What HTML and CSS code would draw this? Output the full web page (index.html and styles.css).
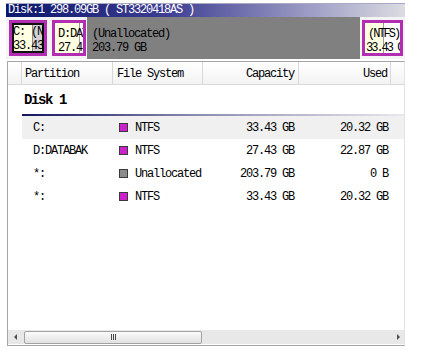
FILE: index.html
```html
<!DOCTYPE html>
<html lang="en">
<head>
    <meta charset="UTF-8">
    <title>Partition Wizard</title>
    <link rel="stylesheet" href="styles.css">
</head>
<body>
    <div class="window">
        <div class="disk-title">Disk:1 298.09GB ( ST3320418AS )</div>

        <div class="disk-map">
            <div class="part part-c selected" style="--used: 62%">
                <div class="label">C: (NTFS)</div>
                <div class="label">33.43 GB</div>
            </div>
            <div class="part part-d" style="--used: 85%">
                <div class="label">D:DATABAK</div>
                <div class="label">27.43 GB</div>
            </div>
            <div class="unallocated">
                <div>(Unallocated)</div>
                <div>203.79 GB</div>
            </div>
            <div class="part part-last" style="--used: 52%">
                <div class="label indent">(NTFS)</div>
                <div class="label">33.43 GB</div>
            </div>
        </div>

        <div class="list">
            <div class="list-head">
                <div class="col"></div>
                <div class="col">Partition</div>
                <div class="col">File System</div>
                <div class="col right">Capacity</div>
                <div class="col right">Used</div>
                <div class="col last"></div>
            </div>

            <div class="list-body">
                <div class="disk-row">Disk 1</div>

                <div class="row selected">
                    <div class="name">C:</div>
                    <div class="fs"><span class="swatch ntfs"></span>NTFS</div>
                    <div class="num cap">33.43 GB</div>
                    <div class="num used">20.32 GB</div>
                </div>
                <div class="row">
                    <div class="name">D:DATABAK</div>
                    <div class="fs"><span class="swatch ntfs"></span>NTFS</div>
                    <div class="num cap">27.43 GB</div>
                    <div class="num used">22.87 GB</div>
                </div>
                <div class="row">
                    <div class="name">*:</div>
                    <div class="fs"><span class="swatch unalloc"></span>Unallocated</div>
                    <div class="num cap">203.79 GB</div>
                    <div class="num used">0 B</div>
                </div>
                <div class="row">
                    <div class="name">*:</div>
                    <div class="fs"><span class="swatch ntfs"></span>NTFS</div>
                    <div class="num cap">33.43 GB</div>
                    <div class="num used">20.32 GB</div>
                </div>
            </div>

            <div class="hscroll">
                <div class="arrow"><span class="tri-left"></span></div>
                <div class="track">
                    <div class="thumb"><span class="grip"></span></div>
                </div>
                <div class="arrow"><span class="tri-right"></span></div>
            </div>
        </div>
    </div>
</body>
</html>
```

FILE: styles.css
```css
body {
    margin: 0;
    background-color: #fff;
    color: #000;
    font-family: "Liberation Mono", "DejaVu Sans Mono", monospace;
    font-size: 12px;
    letter-spacing: -1.2px;
}

.window {
    width: 399px;
    margin: 3px 0 0 6px;
}

/* disk map */
.disk-title {
    height: 13px;
    line-height: 13px;
    padding-left: 2px;
    color: #fff;
    border-top: 1px solid #a8a8c0;
    background: linear-gradient(to right, #0b176c 0%, #3d3d92 40%, #9a9ac4 75%, #dcdce2 100%);
    white-space: nowrap;
}

.disk-map {
    display: flex;
    height: 42px;
    background-color: #f4f4f4;
}

.part {
    box-sizing: border-box;
    margin: 3px 0 3px 3px;
    padding: 4px 0 0 3px;
    border: 3px solid #b22db2;
    line-height: 14px;
    white-space: nowrap;
    overflow: hidden;
    background: linear-gradient(to right,
        #ffffe1 var(--used), #9a9a9a var(--used),
        #9a9a9a calc(var(--used) + 1px), #fff calc(var(--used) + 1px));
}

.part .label {
    overflow: hidden;
}

.part-c {
    width: 38px;
    padding-top: 2px;
    padding-left: 1px;
    background: linear-gradient(to right,
        #ffffe1 var(--used), #8a8a8a var(--used),
        #8a8a8a calc(var(--used) + 1px), #d2d2d2 calc(var(--used) + 1px));
}

.part.selected {
    box-shadow: inset 0 0 0 2px #111;
}

.part-d {
    width: 34px;
    margin-left: 5px;
}

.part-last {
    width: 41px;
    margin: 3px 2px;
    padding-left: 1px;
    letter-spacing: -2px;
}

.part-last .indent {
    padding-left: 2px;
}

.unallocated {
    flex: 1;
    margin-left: 1px;
    padding: 10px 0 0 5px;
    line-height: 14px;
    background-color: #808080;
    white-space: nowrap;
}

/* partition list */
.list {
    box-sizing: border-box;
    display: flex;
    flex-direction: column;
    width: 398px;
    height: 285px;
    margin: 2px 0 0 1px;
    border: 1px solid #a6a6a6;
    border-right-color: #e4e4e4;
}

.list-head {
    display: grid;
    grid-template-columns: 14px 91px 90px 96px 92px 1fr;
    height: 22px;
    border-bottom: 1px solid #dadada;
    background: linear-gradient(#fff, #f3f3f3);
}

.list-head .col {
    box-sizing: border-box;
    padding: 5px 4px 0 3px;
    border-right: 1px solid #d8d8d8;
    white-space: nowrap;
}

.list-head .col:nth-child(3) {
    padding-left: 4px;
}

.list-head .col.right {
    text-align: right;
}

.list-head .col:nth-child(5) {
    padding-right: 3px;
}

.list-head .col.last {
    border-right: none;
}

.list-body {
    flex: 1;
}

.disk-row {
    height: 29px;
    margin-left: 14px;
    padding-left: 2px;
    line-height: 31px;
    font-size: 14px;
    font-weight: bold;
    letter-spacing: -1.4px;
    border-bottom: 2px solid;
    border-image: linear-gradient(to right, #14145e, #8a8ab0 45%, #e8e8ec) 1;
}

.row {
    display: grid;
    grid-template-columns: 91px 90px 96px 92px 1fr;
    align-items: center;
    height: 23px;
    margin-left: 14px;
    white-space: nowrap;
}

.row.selected {
    background-color: #f0f0f0;
}

.name {
    padding-left: 11px;
}

.fs {
    display: flex;
    align-items: center;
    padding-left: 6px;
}

.swatch {
    box-sizing: border-box;
    width: 9px;
    height: 9px;
    margin-right: 7px;
    border: 1px solid #3a3a3a;
}

.swatch.ntfs {
    background-color: #cc22cc;
}

.swatch.unalloc {
    background-color: #8c8c8c;
}

.num {
    text-align: right;
}

.num.cap {
    padding-right: 5px;
}

.num.used {
    padding-right: 3px;
}

/* horizontal scrollbar */
.hscroll {
    display: flex;
    align-items: center;
    height: 14px;
    background-color: #e8e8e8;
    border-bottom: 1px solid #fff;
}

.arrow {
    display: flex;
    justify-content: center;
    align-items: center;
    width: 15px;
}

.arrow:last-child {
    width: 12px;
}

.tri-left {
    border-top: 3px solid transparent;
    border-bottom: 3px solid transparent;
    border-right: 3px solid #505050;
}

.tri-right {
    border-top: 3px solid transparent;
    border-bottom: 3px solid transparent;
    border-left: 3px solid #505050;
}

.track {
    flex: 1;
    display: flex;
    align-items: center;
    height: 100%;
    padding-left: 1px;
}

.thumb {
    box-sizing: border-box;
    display: flex;
    justify-content: center;
    align-items: center;
    width: 178px;
    height: 13px;
    border: 1px solid #a2a2a2;
    border-radius: 2px;
    background: linear-gradient(#fafafa, #e2e2e2);
}

.grip {
    width: 5px;
    height: 6px;
    background: repeating-linear-gradient(to right, #4a4a4a 0 1px, transparent 1px 2px);
}
```
